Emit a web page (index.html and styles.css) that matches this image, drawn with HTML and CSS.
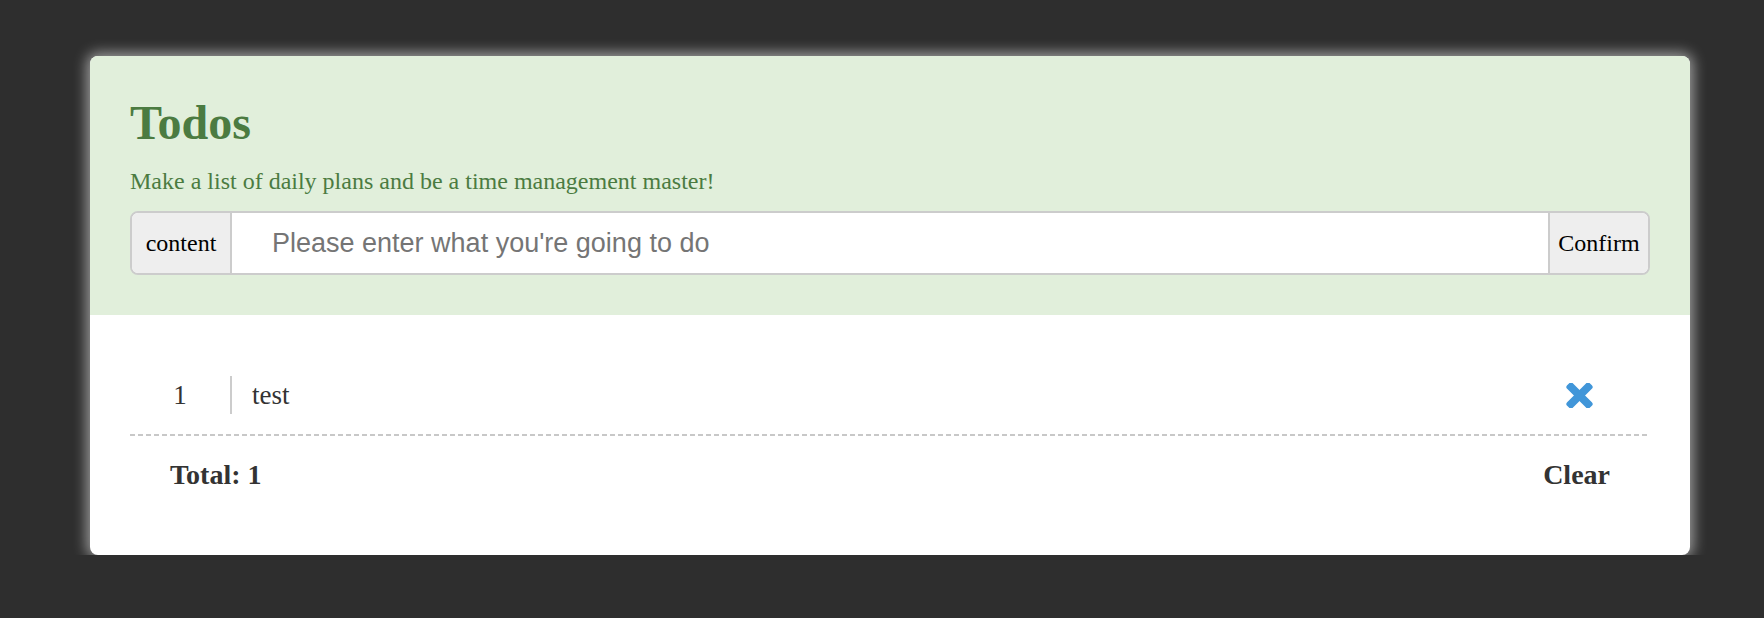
FILE: index.html
```html
<!DOCTYPE html>
<html lang="en">
<head>
    <meta charset="UTF-8">
    <meta name="viewport" content="width=device-width, initial-scale=1.0">
    <link rel="stylesheet" href="styles.css">
    <title>Todos</title>
</head>
<body>

    <div class="todo-card">
        <div class="todo-header">
            <h1>Todos</h1>
            <p class="subtitle">Make a list of daily plans and be a time management master!</p>
            <div class="input-group">
                <span class="addon">content</span>
                <input type="text" class="todo-input" placeholder="Please enter what you're going to do">
                <button class="confirm-btn">Confirm</button>
            </div>
        </div>

        <div class="todo-body">
            <ul class="todo-list">
                <li class="todo-item">
                    <span class="item-index">1</span>
                    <span class="item-text">test</span>
                    <span class="item-delete">
                        <svg width="27" height="25" viewBox="0 0 27 25">
                            <g fill="#4196d9" transform="translate(13.5 12.5) rotate(45)">
                                <rect x="-16" y="-4" width="32" height="8" rx="2.5"/>
                                <rect x="-4" y="-16" width="8" height="32" rx="2.5"/>
                            </g>
                        </svg>
                    </span>
                </li>
            </ul>
            <div class="todo-footer">
                <span>Total: 1</span>
                <span>Clear</span>
            </div>
        </div>
    </div>

</body>
</html>
```

FILE: styles.css
```css
body {
    margin: 0;
    background-color: #2e2e2e;
    font-family: 'Liberation Serif', 'Times New Roman', serif;
    color: #333;
}

.todo-card {
    width: 1600px;
    margin: 56px 0 0 90px;
    background-color: #fff;
    border-radius: 8px;
    overflow: hidden;
    box-shadow: 0 0 14px 3px rgba(255, 255, 255, 0.55);
}

.todo-header {
    background-color: #e1efdb;
    padding: 39px 40px 40px;
    color: #4b7b41;
}

.todo-header h1 {
    margin: 0;
    font-size: 48px;
    font-weight: bold;
}

.subtitle {
    margin: 18px 0 16px;
    font-size: 24px;
}

.input-group {
    display: flex;
    height: 60px;
    border: 2px solid #ccc;
    border-radius: 8px;
    overflow: hidden;
    background-color: #fff;
}

.addon,
.confirm-btn {
    width: 98px;
    display: flex;
    align-items: center;
    justify-content: center;
    background-color: #eee;
    color: #000;
    font-family: 'Liberation Serif', 'Times New Roman', serif;
    font-size: 24px;
}

.addon {
    border-right: 2px solid #ccc;
}

.confirm-btn {
    width: 100px;
    border: none;
    border-left: 2px solid #ccc;
    padding: 0;
}

.todo-input {
    flex: 1;
    border: none;
    outline: none;
    padding: 0 0 0 40px;
    font-family: 'Liberation Sans', Arial, sans-serif;
    font-size: 27px;
    color: #333;
}

.todo-input::placeholder {
    color: #757575;
}

.todo-body {
    padding: 40px 40px 0;
}

.todo-list {
    list-style: none;
    margin: 0;
    padding: 0;
}

.todo-item {
    display: flex;
    align-items: center;
    padding: 21px 0 22px;
    font-size: 27px;
    background: linear-gradient(to right, #c8c8c8 5px, transparent 5px) left bottom / 8px 2px repeat-x;
}

.item-index {
    width: 100px;
    height: 38px;
    line-height: 38px;
    text-align: center;
    border-right: 2px solid #ccc;
}

.item-text {
    padding-left: 20px;
}

.item-delete {
    margin-left: auto;
    margin-right: 57px;
    display: flex;
}

.todo-footer {
    display: flex;
    justify-content: space-between;
    padding: 23px 40px 64px;
    font-size: 28px;
    font-weight: bold;
}
```
